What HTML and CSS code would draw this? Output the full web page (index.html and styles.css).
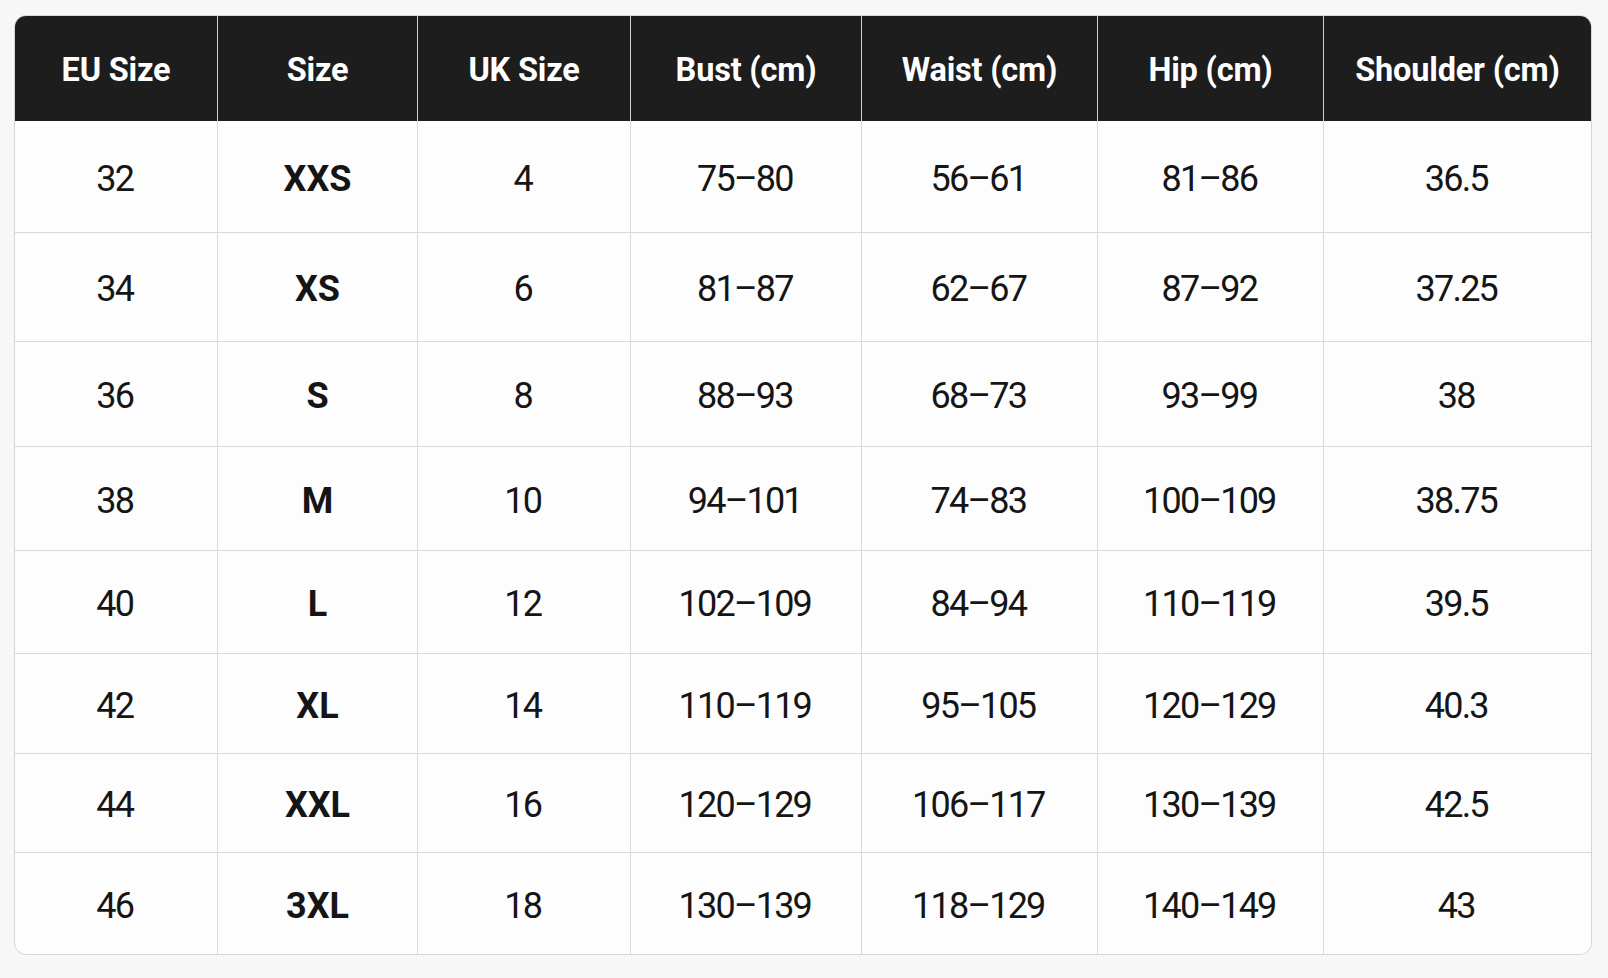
FILE: index.html
```html
<!DOCTYPE html>
<html lang="en">
<head>
<meta charset="utf-8">
<title>Size Chart</title>
<link rel="stylesheet" href="styles.css">
</head>
<body>
<div class="chart">
  <table class="size-table">
    <colgroup>
      <col class="c-eu"><col class="c-size"><col class="c-uk"><col class="c-bust"><col class="c-waist"><col class="c-hip"><col class="c-shoulder">
    </colgroup>
    <thead>
      <tr>
        <th>EU Size</th><th>Size</th><th>UK Size</th><th>Bust (cm)</th><th>Waist (cm)</th><th>Hip (cm)</th><th>Shoulder (cm)</th>
      </tr>
    </thead>
    <tbody>
      <tr><td>32</td><td class="size">XXS</td><td>4</td><td>75–80</td><td>56–61</td><td>81–86</td><td>36.5</td></tr>
      <tr><td>34</td><td class="size">XS</td><td>6</td><td>81–87</td><td>62–67</td><td>87–92</td><td>37.25</td></tr>
      <tr><td>36</td><td class="size">S</td><td>8</td><td>88–93</td><td>68–73</td><td>93–99</td><td>38</td></tr>
      <tr><td>38</td><td class="size">M</td><td>10</td><td>94–101</td><td>74–83</td><td>100–109</td><td>38.75</td></tr>
      <tr><td>40</td><td class="size">L</td><td>12</td><td>102–109</td><td>84–94</td><td>110–119</td><td>39.5</td></tr>
      <tr><td>42</td><td class="size">XL</td><td>14</td><td>110–119</td><td>95–105</td><td>120–129</td><td>40.3</td></tr>
      <tr><td>44</td><td class="size">XXL</td><td>16</td><td>120–129</td><td>106–117</td><td>130–139</td><td>42.5</td></tr>
      <tr><td>46</td><td class="size">3XL</td><td>18</td><td>130–139</td><td>118–129</td><td>140–149</td><td>43</td></tr>
    </tbody>
  </table>
</div>
</body>
</html>
```

FILE: styles.css
```css
html, body {
  margin: 0;
  padding: 0;
  background: #f7f7f7;
}

body {
  font-family: Roboto, "Liberation Sans", Arial, sans-serif;
  color: #151515;
}

.chart {
  margin: 15px 16px 0 14px;
  width: 1576px;
  border: 1px solid #d6d6d6;
  border-radius: 12px;
  overflow: hidden;
  background: #fdfdfd;
}

.size-table {
  width: 100%;
  border-collapse: separate;
  border-spacing: 0;
  table-layout: fixed;
}

.c-eu { width: 203px; }
.c-size { width: 200px; }
.c-uk { width: 213px; }
.c-bust { width: 231px; }
.c-waist { width: 236px; }
.c-hip { width: 226px; }
.c-shoulder { width: 267px; }

.size-table th,
.size-table td {
  text-align: center;
  vertical-align: middle;
  padding: 4px 0 0 0;
  border-right: 1.5px solid #d9d9d9;
  border-bottom: 1.5px solid #d9d9d9;
}

.size-table th:last-child,
.size-table td:last-child {
  border-right: none;
}

.size-table tbody tr:last-child td {
  border-bottom: none;
}

.size-table th {
  background: #1d1d1d;
  color: #ffffff;
  font-weight: 700;
  font-size: 32.5px;
  line-height: 1;
  height: 105px;
  box-sizing: border-box;
  border-right-color: #cfcfcf;
  border-bottom: none;
  letter-spacing: -0.2px;
}

.size-table td {
  font-size: 36px;
  font-weight: 400;
  line-height: 1;
  box-sizing: border-box;
  letter-spacing: -1.8px;
  text-indent: -2.4px;
}

.size-table td.size {
  font-weight: 700;
  letter-spacing: 0;
  text-indent: 0;
}

.size-table tbody tr:nth-child(1) td { height: 112px; }
.size-table tbody tr:nth-child(2) td { height: 109px; }
.size-table tbody tr:nth-child(3) td { height: 105px; }
.size-table tbody tr:nth-child(4) td { height: 104px; }
.size-table tbody tr:nth-child(5) td { height: 103px; }
.size-table tbody tr:nth-child(6) td { height: 100px; }
.size-table tbody tr:nth-child(7) td { height: 99px; }
.size-table tbody tr:nth-child(8) td { height: 101px; }
```
